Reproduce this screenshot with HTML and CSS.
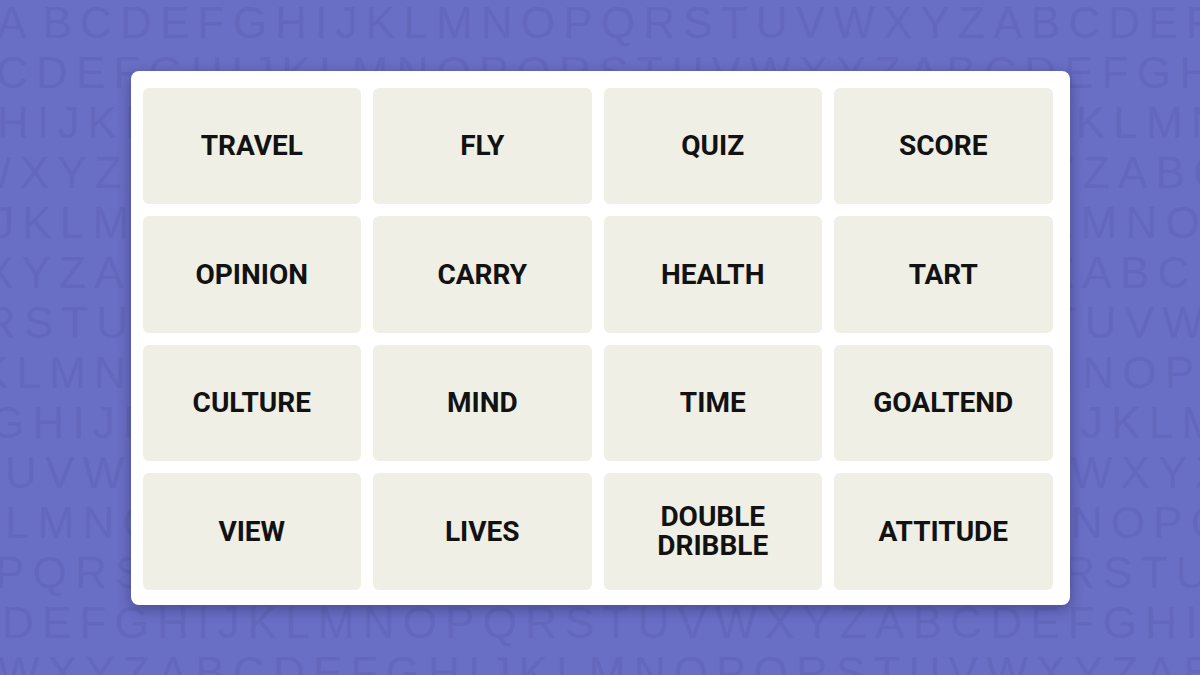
FILE: index.html
```html
<!DOCTYPE html>
<html lang="en">
<head>
<meta charset="utf-8">
<title>Connections</title>
<link rel="stylesheet" href="styles.css">
</head>
<body>
<div class="stage">
  <div class="pattern" aria-hidden="true">
    <div class="row r1"><span class="lead">A</span>BCDEFGHIJKLMNOPQRSTUVWXYZABCDEFGH</div>
    <div class="row r2">CDEFGHIJKLMNOPQRSTUVWXYZABCDEFGHIJ</div>
    <div class="row r3">HIJKLMNOPQRSTUVWXYZABCDEFGHIJKLMNO</div>
    <div class="row r4">WXYZABCDEFGHIJKLMNOPQRSTUVWXYZABCD</div>
    <div class="row r5">JKLMNOPQRSTUVWXYZABCDEFGHIJKLMNOPQ</div>
    <div class="row r6">XYZABCDEFGHIJKLMNOPQRSTUVWXYZABCDE</div>
    <div class="row r7">RSTUVWXYZABCDEFGHIJKLMNOPQRSTUVWXY</div>
    <div class="row r8">KLMNOPQRSTUVWXYZABCDEFGHIJKLMNOPQR</div>
    <div class="row r9">GHIJKLMNOPQRSTUVWXYZABCDEFGHIJKLMN</div>
    <div class="row r10">UVWXYZABCDEFGHIJKLMNOPQRSTUVWXYZAB</div>
    <div class="row r11">LMNOPQRSTUVWXYZABCDEFGHIJKLMNOPQRS</div>
    <div class="row r12">PQRSTUVWXYZABCDEFGHIJKLMNOPQRSTUVW</div>
    <div class="row r13">DEFGHIJKLMNOPQRSTUVWXYZABCDEFGHIJK</div>
    <div class="row r14">WXYZABCDEFGHIJKLMNOPQRSTUVWXYZABCD</div>
  </div>

  <div class="board">
    <div class="grid">
      <div class="tile">TRAVEL</div>
      <div class="tile">FLY</div>
      <div class="tile">QUIZ</div>
      <div class="tile">SCORE</div>
      <div class="tile">OPINION</div>
      <div class="tile">CARRY</div>
      <div class="tile">HEALTH</div>
      <div class="tile">TART</div>
      <div class="tile">CULTURE</div>
      <div class="tile">MIND</div>
      <div class="tile">TIME</div>
      <div class="tile">GOALTEND</div>
      <div class="tile">VIEW</div>
      <div class="tile">LIVES</div>
      <div class="tile">DOUBLE<br>DRIBBLE</div>
      <div class="tile">ATTITUDE</div>
    </div>
  </div>
</div>
</body>
</html>
```

FILE: styles.css
```css
html, body {
  margin: 0;
  padding: 0;
}

body {
  width: 1200px;
  height: 675px;
  overflow: hidden;
  background: #6a6fc6;
}

/* pattern and board share one grid cell, the board sits on top */
.stage {
  display: grid;
  width: 1200px;
  height: 675px;
  overflow: hidden;
}

.pattern,
.board {
  grid-area: 1 / 1;
}

/* alphabet wallpaper */
.pattern {
  margin-top: -2px;
  font-family: "Liberation Sans", Arial, sans-serif;
  font-size: 44px;
  line-height: 50px;
  letter-spacing: 8.2px;
  color: #6368bc;
  overflow: hidden;
}

.row {
  white-space: nowrap;
}

.lead {
  margin-right: 8px;
}

.r1  { text-indent: -3px; }
.r2  { text-indent: -4px; }
.r3  { text-indent: -3px; }
.r4  { text-indent: -30px; }
.r5  { text-indent: -8px; }
.r6  { text-indent: -16px; }
.r7  { text-indent: -16px; }
.r8  { text-indent: -21px; }
.r9  { text-indent: -10px; }
.r10 { text-indent: 5px; }
.r11 { text-indent: 5px; }
.r12 { text-indent: -5px; }
.r13 { text-indent: 2px; }
.r14 { text-indent: -2px; }

/* white card holding the 4x4 word grid */
.board {
  align-self: center;
  justify-self: center;
  background: #ffffff;
  border-radius: 8px;
  padding: 17px 17px 15px 12px;
  box-shadow: 0 4px 14px rgba(28, 28, 80, 0.45);
}

.grid {
  display: grid;
  grid-template-columns: repeat(4, 218.5px);
  grid-auto-rows: 116.5px;
  gap: 12px;
}

.tile {
  display: flex;
  align-items: center;
  justify-content: center;
  text-align: center;
  background: #efefe6;
  border-radius: 6px;
  font-family: Roboto, "Liberation Sans", Arial, sans-serif;
  font-weight: 700;
  font-size: 28px;
  line-height: 29px;
  color: #121212;
}
```
